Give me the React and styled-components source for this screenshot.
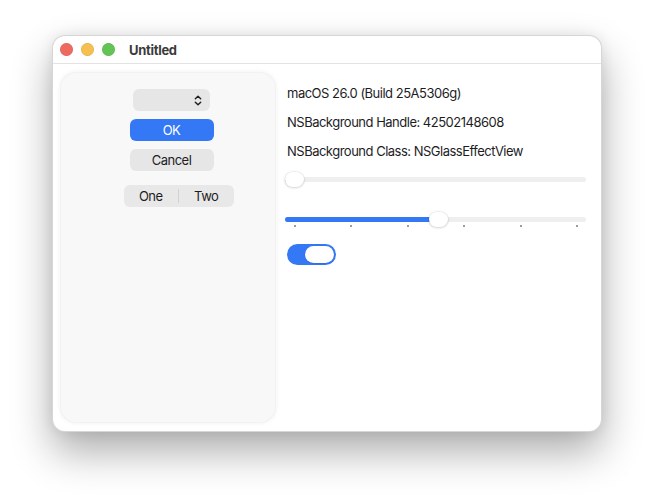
import styled, { createGlobalStyle } from 'styled-components';

const GlobalStyle = createGlobalStyle`
    * {
        box-sizing: border-box;
    }

    body {
        margin: 0;
        background: #ffffff;
        font-family: Inter, 'Noto Sans', 'Liberation Sans', sans-serif;
        letter-spacing: -0.5px;
        color: #1d1d1f;
        -webkit-font-smoothing: antialiased;
    }
`;

const Page = styled.div`
    width: 654px;
    height: 500px;
    padding: 35px 52px 0;
`;

const Window = styled.div`
    width: 550px;
    height: 397px;
    display: flex;
    flex-direction: column;
    background: #ffffff;
    border: 1px solid rgba(0, 0, 0, 0.16);
    border-radius: 13px;
    box-shadow: 0 20px 40px rgba(0, 0, 0, 0.32), 0 0 14px rgba(0, 0, 0, 0.08);
`;

const TitleBar = styled.div`
    height: 28px;
    flex-shrink: 0;
    display: flex;
    align-items: center;
    padding-left: 7px;
    border-bottom: 1px solid #e3e3e3;
`;

const Lights = styled.div`
    display: flex;
    gap: 8px;
    margin-right: 14px;
`;

const Light = styled.span`
    width: 13px;
    height: 13px;
    border-radius: 50%;
    background: ${(props) => props.color};
    box-shadow: inset 0 0 0 0.5px rgba(0, 0, 0, 0.12);
`;

const Title = styled.span`
    font-size: 13px;
    font-weight: 700;
    letter-spacing: -0.3px;
    color: #3b3b3b;
`;

const Content = styled.div`
    flex: 1;
    display: flex;
    gap: 9px;
    padding: 8px 15px 8px 7px;
`;

const Sidebar = styled.div`
    width: 216px;
    flex-shrink: 0;
    display: flex;
    flex-direction: column;
    align-items: center;
    padding: 16px 0 0 7px;
    background: #f8f8f8;
    border-radius: 16px;
    border: 1px solid rgba(0, 0, 0, 0.025);
    box-shadow: 0 0 5px rgba(0, 0, 0, 0.06);
`;

const Popup = styled.div`
    width: 77px;
    height: 22px;
    display: flex;
    align-items: center;
    justify-content: flex-end;
    padding-right: 8px;
    background: #e6e6e6;
    border-radius: 6px;
`;

const Button = styled.div`
    width: 84px;
    height: 22px;
    margin-top: 8px;
    display: flex;
    align-items: center;
    justify-content: center;
    font-size: 13px;
    border-radius: 6px;
    background: ${(props) => (props.primary ? '#3478f6' : '#e6e6e6')};
    color: ${(props) => (props.primary ? '#ffffff' : '#1d1d1f')};
`;

const Segmented = styled.div`
    margin-top: 14px;
    margin-left: ${(props) => props.offset || 0}px;
    width: 110px;
    height: 22px;
    display: flex;
    align-items: center;
    background: #e8e8e8;
    border-radius: 6px;
`;

const Segment = styled.div`
    flex: 1;
    text-align: center;
    font-size: 13px;
    line-height: 14px;
    border-left: ${(props) => (props.divider ? '1px solid #d2d2d2' : 'none')};
`;

const Main = styled.div`
    flex: 1;
    display: flex;
    flex-direction: column;
    padding-top: 13px;
`;

const InfoLine = styled.div`
    font-size: 13px;
    line-height: 16px;
    margin: 0 0 13px 2px;
`;

const SliderBox = styled.div`
    position: relative;
    height: 16px;
    margin-top: ${(props) => props.top}px;
    display: flex;
    align-items: center;
`;

const Track = styled.div`
    width: 100%;
    height: 5px;
    border-radius: 3px;
    background: #efefef;
    overflow: hidden;
`;

const Fill = styled.div`
    height: 100%;
    background: #3478f6;
`;

const Thumb = styled.div`
    position: absolute;
    top: 0.5px;
    width: 19px;
    height: 15px;
    border-radius: 8px;
    background: #ffffff;
    box-shadow: 0 0.5px 2.5px rgba(0, 0, 0, 0.22), 0 0 0 0.5px rgba(0, 0, 0, 0.04);
`;

const Ticks = styled.div`
    display: flex;
    justify-content: space-between;
    padding: 0 8px 0 9px;
    margin-top: -2px;
`;

const Tick = styled.span`
    width: 2px;
    height: 1.5px;
    background: #9c9c9c;
`;

const Toggle = styled.div`
    width: 49px;
    height: 21px;
    margin: 17px 0 0 2px;
    padding: 2px;
    display: flex;
    justify-content: ${(props) => (props.on ? 'flex-end' : 'flex-start')};
    border-radius: 11px;
    background: ${(props) => (props.on ? '#3478f6' : '#e3e3e3')};
`;

const Knob = styled.span`
    width: 29px;
    height: 17px;
    border-radius: 9px;
    background: #ffffff;
    box-shadow: 0 0.5px 1.5px rgba(0, 0, 0, 0.15);
`;

const Chevrons = () => (
    <svg width="8" height="11" viewBox="0 0 8 11" fill="none" stroke="#1d1d1f" strokeWidth="1.4" strokeLinecap="round" strokeLinejoin="round">
        <polyline points="1.3,3.8 4,1.2 6.7,3.8" />
        <polyline points="1.3,7.2 4,9.8 6.7,7.2" />
    </svg>
);

const Slider = ({ value, top, ticks }) => {
    const thumbWidth = 19;
    const trackWidth = 302;
    const left = value * (trackWidth - thumbWidth);

    return (
        <>
            <SliderBox top={top}>
                <Track>
                    <Fill style={{ width: `${left + thumbWidth / 2}px` }} />
                </Track>
                <Thumb style={{ left: `${left}px` }} />
            </SliderBox>
            {ticks && (
                <Ticks>
                    {Array.from({ length: ticks }).map((el, ind) => (
                        <Tick key={ind} />
                    ))}
                </Ticks>
            )}
        </>
    );
};

const App = () => {
    return (
        <Page>
            <GlobalStyle />
            <Window>
                <TitleBar>
                    <Lights>
                        <Light color="#ee6a5f" />
                        <Light color="#f5c04f" />
                        <Light color="#61c454" />
                    </Lights>
                    <Title>Untitled</Title>
                </TitleBar>
                <Content>
                    <Sidebar>
                        <Popup>
                            <Chevrons />
                        </Popup>
                        <Button primary>OK</Button>
                        <Button>Cancel</Button>
                        <Segmented offset={14}>
                            <Segment>One</Segment>
                            <Segment divider>Two</Segment>
                        </Segmented>
                    </Sidebar>
                    <Main>
                        <InfoLine>macOS 26.0 (Build 25A5306g)</InfoLine>
                        <InfoLine>NSBackground Handle: 42502148608</InfoLine>
                        <InfoLine>NSBackground Class: NSGlassEffectView</InfoLine>
                        <Slider value={0} top={-1} />
                        <Slider value={0.51} top={24} ticks={6} />
                        <Toggle on>
                            <Knob />
                        </Toggle>
                    </Main>
                </Content>
            </Window>
        </Page>
    );
};

export default App;
